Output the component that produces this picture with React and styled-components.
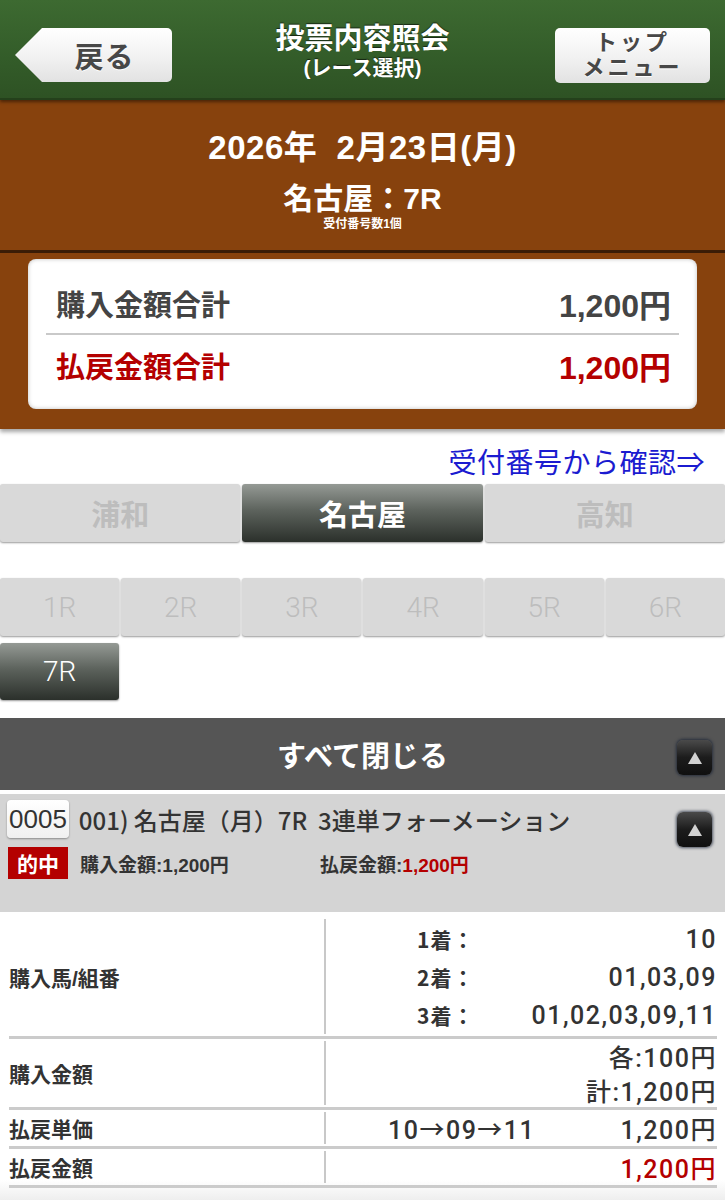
import styled, { createGlobalStyle } from "styled-components";

const GlobalStyle = createGlobalStyle`
  html, body {
    margin: 0;
    padding: 0;
    background: #ffffff;
  }
  body {
    font-family: "Liberation Sans", "Noto Sans CJK JP", sans-serif;
    color: #333;
  }
`;

const Page = styled.div`
  width: 725px;
  min-height: 1200px;
  background: linear-gradient(to bottom, #ffffff 0, #ffffff 1180px, #eeeeee 1200px);
`;

/* ヘッダー */
const Header = styled.header`
  height: 100px;
  box-sizing: border-box;
  padding-top: 12px;
  display: grid;
  grid-template-columns: 185px 1fr 185px;
  align-items: center;
  background: linear-gradient(to bottom, #3d6a31 0%, #335c29 60%, #2e5224 100%);
  border-bottom: 2px solid #24401b;
  position: relative;
  z-index: 2;
  box-shadow: 0 2px 3px rgba(0, 0, 0, 0.45);
`;

const BackButton = styled.div`
  margin-left: 15px;
  width: 157px;
  height: 54px;
  display: flex;
  align-items: center;
  justify-content: center;
  padding-left: 22px;
  box-sizing: border-box;
  background: linear-gradient(to bottom, #ffffff 0%, #f1f1f1 55%, #e2e2e2 100%);
  border-radius: 0 5px 5px 0;
  clip-path: polygon(27px 0, 100% 0, 100% 100%, 27px 100%, 0 50%);
  font-size: 29px;
  font-weight: 700;
  color: #474747;
  text-shadow: 0 1px 0 #fff;
  letter-spacing: 1px;
`;

const TitleBlock = styled.div`
  text-align: center;
  color: #fff;
  font-weight: 700;
  text-shadow: 0 -1px 1px rgba(0, 0, 0, 0.6);
  line-height: 1;
  margin-top: -8px;
`;

const Title = styled.div`
  font-size: 29px;
`;

const SubTitle = styled.div`
  font-size: 21px;
  margin-top: 3px;
`;

const MenuButton = styled.div`
  justify-self: end;
  margin-right: 15px;
  width: 155px;
  height: 55px;
  border-radius: 5px;
  background: linear-gradient(to bottom, #ffffff 0%, #f1f1f1 55%, #e2e2e2 100%);
  display: flex;
  flex-direction: column;
  align-items: center;
  justify-content: center;
  font-size: 22px;
  font-weight: 700;
  color: #474747;
  line-height: 25px;
  text-shadow: 0 1px 0 #fff;
  letter-spacing: 3px;
`;

/* 日付・場名 */
const DateBlock = styled.section`
  background: #87420d;
  height: 153px;
  box-sizing: border-box;
  padding-top: 27px;
  color: #fff;
  text-align: center;
  font-weight: 700;
  border-bottom: 3px solid #3b1d07;
`;

const DateText = styled.div`
  font-size: 33px;
  line-height: 42px;
  letter-spacing: 0.5px;
`;

const RaceText = styled.div`
  font-size: 30px;
  line-height: 36px;
  margin-top: 12px;
`;

const CountText = styled.div`
  font-size: 12px;
  line-height: 14px;
`;

const SummaryBlock = styled.section`
  background: #87420d;
  padding: 6px 28px 20px;
  box-shadow: 0 3px 4px rgba(0, 0, 0, 0.35);
  position: relative;
  z-index: 1;
`;

const SummaryCard = styled.div`
  background: #fff;
  border-radius: 8px;
  padding: 14px 18px 14px 18px;
  box-shadow: inset 0 0 4px rgba(0, 0, 0, 0.25);
`;

const SummaryRow = styled.div`
  display: flex;
  justify-content: space-between;
  align-items: center;
  height: 60px;
  padding: 0 8px 0 10px;
  font-size: 29px;
  font-weight: 700;
  color: ${(p) => (p.$red ? "#b40000" : "#444")};
  border-bottom: ${(p) => (p.$divider ? "2px solid #c9c9c9" : "none")};
`;

const Amount = styled.span`
  font-size: 32px;
`;

const LinkRow = styled.div`
  height: 55px;
  display: flex;
  align-items: flex-end;
  justify-content: flex-end;
  padding: 0 20px 3px 0;
  box-sizing: border-box;
  font-size: 28px;
  letter-spacing: 0.5px;
  color: #1b1bd0;
  font-family: "Noto Sans CJK JP", "Liberation Sans", sans-serif;
`;

/* 場・レース選択ボタン */
const TabGrid = styled.div`
  display: grid;
  grid-template-columns: repeat(${(p) => p.$cols}, 1fr);
  gap: 2px;
`;

const RaceArea = styled.div`
  margin-top: 36px;
  display: flex;
  flex-direction: column;
  gap: 7px;
`;

const SelectButton = styled.div`
  height: ${(p) => p.$h || 58}px;
  border-radius: 3px;
  display: flex;
  align-items: center;
  justify-content: center;
  font-size: ${(p) => (p.$bold ? 29 : 28)}px;
  font-weight: ${(p) => (p.$bold ? 700 : 300)};
  font-family: ${(p) =>
    p.$bold
      ? `"Noto Sans CJK JP", sans-serif`
      : `Roboto, "Noto Sans CJK JP", sans-serif`};
  background: ${(p) =>
    p.$active
      ? "linear-gradient(to bottom, #959a95 0%, #5d635d 45%, #2b302b 100%)"
      : "#d9d9d9"};
  color: ${(p) => (p.$active ? "#ffffff" : "#bdbdbd")};
  box-shadow: 0 1px 2px rgba(0, 0, 0, 0.4);
`;

/* 明細 */
const CloseBar = styled.div`
  margin-top: 18px;
  height: 72px;
  background: #555555;
  display: flex;
  align-items: center;
  justify-content: center;
  position: relative;
  color: #fff;
  font-size: 29px;
  font-weight: 700;
  font-family: "Noto Sans CJK JP", sans-serif;
  border-bottom: 4px solid #ffffff;
`;

const ToggleButton = styled.div`
  position: absolute;
  right: 13px;
  top: ${(p) => p.$top}px;
  width: 35px;
  height: 35px;
  border-radius: 6px;
  background: linear-gradient(to bottom, #4a4a4a 0%, #1c1c1c 50%, #101010 100%);
  box-shadow: 0 0 3px 1px rgba(20, 30, 50, 0.7);
  display: flex;
  align-items: center;
  justify-content: center;
`;

const TicketHeader = styled.div`
  position: relative;
  background: #d4d4d4;
  height: 118px;
  padding: 6px 0 0 7px;
  box-sizing: border-box;
`;

const TicketTitle = styled.div`
  display: flex;
  align-items: center;
  gap: 10px;
  font-size: 24px;
  color: #333;
  font-family: "Noto Sans CJK JP", sans-serif;
  font-weight: 500;
`;

const TicketNo = styled.span`
  display: inline-block;
  padding: 0 2px;
  height: 38px;
  line-height: 38px;
  border-radius: 4px;
  background: linear-gradient(to bottom, #ffffff 0%, #f0f0f0 100%);
  box-shadow: 0 1px 2px rgba(0, 0, 0, 0.35);
  font-family: "Liberation Sans", sans-serif;
  font-size: 26px;
`;

const ResultLine = styled.div`
  display: flex;
  align-items: center;
  margin-top: 9px;
  padding-left: 1px;
  font-size: 19px;
  font-weight: 700;
  color: #333;
`;

const HitBadge = styled.span`
  display: inline-flex;
  align-items: center;
  justify-content: center;
  width: 60px;
  height: 32px;
  background: #b40000;
  color: #fff;
  font-size: 21px;
  font-weight: 700;
  margin-right: 12px;
`;

const ResultItem = styled.span`
  width: ${(p) => p.$w || "auto"};
`;

const Red = styled.span`
  color: #b40000;
`;

const Table = styled.div`
  margin: 5px 8px 0 9px;
`;

const Row = styled.div`
  display: grid;
  grid-template-columns: 317px 1fr;
  border-bottom: 3px solid #cbcbcb;
`;

const LabelCell = styled.div`
  display: flex;
  align-items: center;
  font-size: 21px;
  font-weight: 700;
  color: #333;
  border-right: 2px solid #c8c8c8;
  margin: 2px 0;
`;

const ValueCell = styled.div`
  display: flex;
  flex-direction: column;
  padding: ${(p) => p.$pad || "0"};
`;

const ValueLine = styled.div`
  height: ${(p) => p.$h || 38}px;
  display: flex;
  align-items: center;
  justify-content: space-between;
  padding-left: ${(p) => p.$indent || 0}px;
  font-family: Roboto, "Noto Sans CJK JP", sans-serif;
  font-size: 25px;
  letter-spacing: 1.5px;
  font-weight: 500;
  color: ${(p) => (p.$red ? "#b40000" : "#333")};
`;

const RankLabel = styled.span`
  font-family: "Noto Sans CJK JP", sans-serif;
  font-size: 21px;
  letter-spacing: 1px;
  font-weight: 700;
`;

const Spacer = styled.span`
  flex: 1;
`;

const Triangle = () => (
  <svg width="16" height="14" viewBox="0 0 16 14">
    <polygon points="8,1 15,13 1,13" fill="#d2d2d2" />
  </svg>
);

const venues = [
  { name: "浦和", active: false },
  { name: "名古屋", active: true },
  { name: "高知", active: false },
];

const races = ["1R", "2R", "3R", "4R", "5R", "6R"];

const ranks = [
  { label: "1着：", value: "10" },
  { label: "2着：", value: "01,03,09" },
  { label: "3着：", value: "01,02,03,09,11" },
];

export default function App() {
  return (
    <Page>
      <GlobalStyle />
      <Header>
        <BackButton>戻る</BackButton>
        <TitleBlock>
          <Title>投票内容照会</Title>
          <SubTitle>(レース選択)</SubTitle>
        </TitleBlock>
        <MenuButton>
          <span>トップ</span>
          <span>メニュー</span>
        </MenuButton>
      </Header>

      <DateBlock>
        <DateText>2026年&nbsp;&nbsp;2月23日(月)</DateText>
        <RaceText>名古屋：7R</RaceText>
        <CountText>受付番号数1個</CountText>
      </DateBlock>

      <SummaryBlock>
        <SummaryCard>
          <SummaryRow $divider>
            <span>購入金額合計</span>
            <Amount>1,200円</Amount>
          </SummaryRow>
          <SummaryRow $red>
            <span>払戻金額合計</span>
            <Amount>1,200円</Amount>
          </SummaryRow>
        </SummaryCard>
      </SummaryBlock>

      <LinkRow>受付番号から確認⇒</LinkRow>

      <TabGrid $cols={3}>
        {venues.map((v) => (
          <SelectButton key={v.name} $bold $active={v.active}>
            {v.name}
          </SelectButton>
        ))}
      </TabGrid>

      <RaceArea>
        <TabGrid $cols={6}>
          {races.map((r) => (
            <SelectButton key={r}>{r}</SelectButton>
          ))}
        </TabGrid>
        <TabGrid $cols={6}>
          <SelectButton $active $h={57}>
            7R
          </SelectButton>
        </TabGrid>
      </RaceArea>

      <CloseBar>
        すべて閉じる
        <ToggleButton $top={22}>
          <Triangle />
        </ToggleButton>
      </CloseBar>

      <TicketHeader>
        <TicketTitle>
          <TicketNo>0005</TicketNo>
          <span>001) 名古屋（月）7R&nbsp;&nbsp;3連単フォーメーション</span>
        </TicketTitle>
        <ResultLine>
          <HitBadge>的中</HitBadge>
          <ResultItem $w="240px">購入金額:1,200円</ResultItem>
          <ResultItem>
            払戻金額:<Red>1,200円</Red>
          </ResultItem>
        </ResultLine>
        <ToggleButton $top={18}>
          <Triangle />
        </ToggleButton>
      </TicketHeader>

      <Table>
        <Row>
          <LabelCell>購入馬/組番</LabelCell>
          <ValueCell $pad="3px 0 2px">
            {ranks.map((r) => (
              <ValueLine key={r.label} $indent={91}>
                <RankLabel>{r.label}</RankLabel>
                <span>{r.value}</span>
              </ValueLine>
            ))}
          </ValueCell>
        </Row>
        <Row>
          <LabelCell>購入金額</LabelCell>
          <ValueCell>
            <ValueLine $h={34}>
              <Spacer />
              <span>各:100円</span>
            </ValueLine>
            <ValueLine $h={34}>
              <Spacer />
              <span>計:1,200円</span>
            </ValueLine>
          </ValueCell>
        </Row>
        <Row>
          <LabelCell>払戻単価</LabelCell>
          <ValueCell>
            <ValueLine $h={36} $indent={62}>
              <span>10→09→11</span>
              <span>1,200円</span>
            </ValueLine>
          </ValueCell>
        </Row>
        <Row>
          <LabelCell>払戻金額</LabelCell>
          <ValueCell>
            <ValueLine $h={36} $red>
              <Spacer />
              <span>1,200円</span>
            </ValueLine>
          </ValueCell>
        </Row>
      </Table>
    </Page>
  );
}
